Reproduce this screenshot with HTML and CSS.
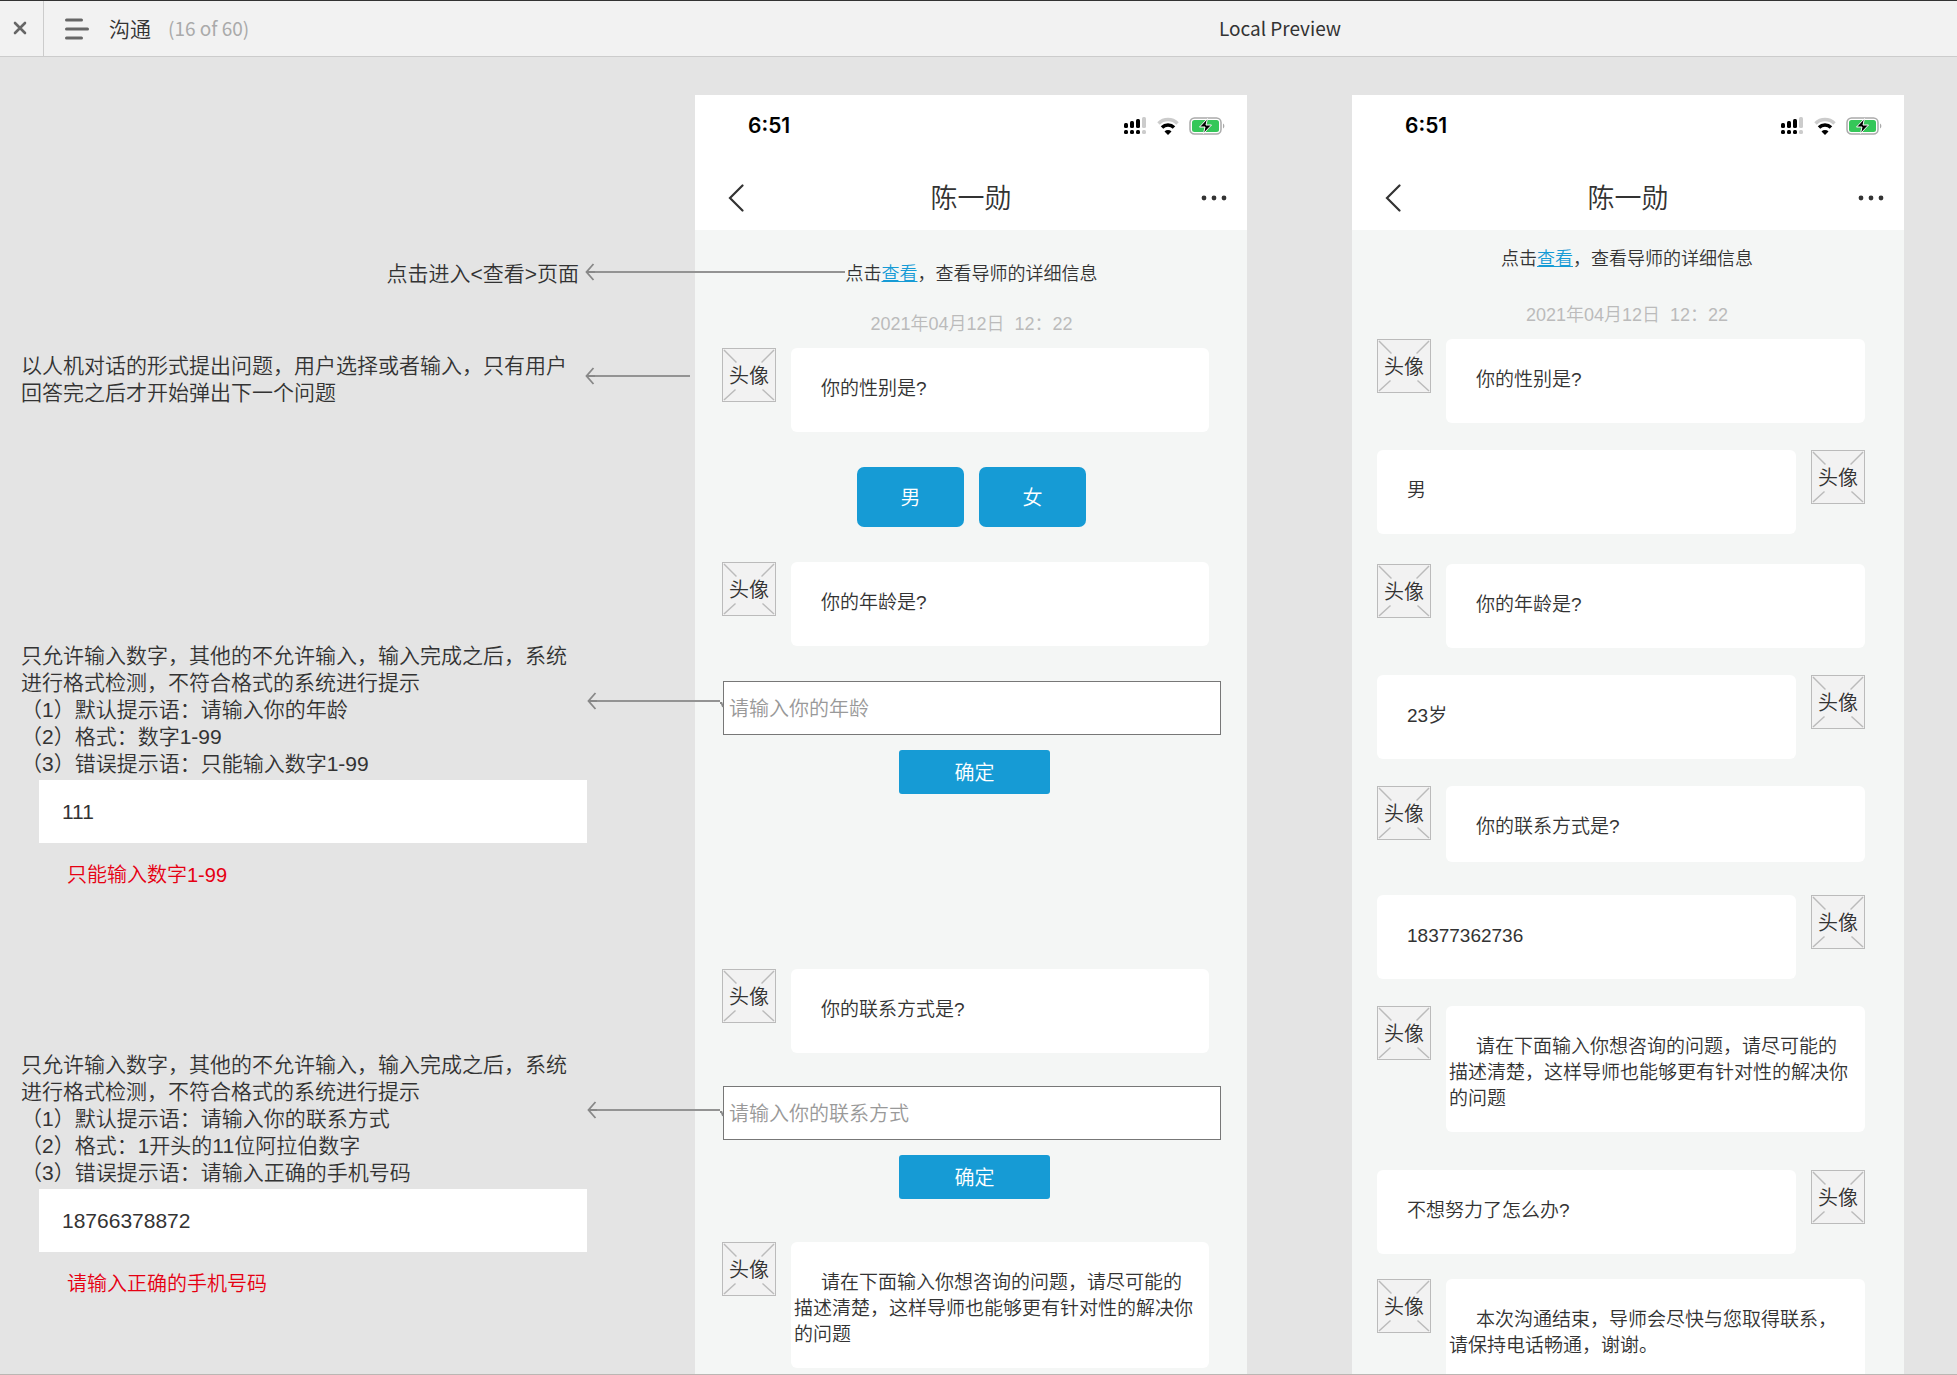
FILE: index.html
```html
<!DOCTYPE html>
<html lang="zh-CN">
<head>
<meta charset="utf-8">
<title>沟通 - Local Preview</title>
<meta name="viewport" content="width=device-width, initial-scale=1">
<link rel="stylesheet" href="styles.css">
</head>
<body>
<svg class="sprite" aria-hidden="true">
  <symbol id="signal" viewBox="0 0 24 18">
    <g fill="#000">
      <rect x="1" y="6" width="4" height="5" rx="1.500"/><rect x="7" y="4" width="4" height="7" rx="1.500"/><rect x="13" y="2" width="4" height="9" rx="1.500"/>
      <rect x="1" y="13" width="4" height="4" rx="1.500"/><rect x="7" y="13" width="4" height="4" rx="1.500"/><rect x="13" y="13" width="4" height="4" rx="1.500"/>
    </g>
    <g fill="#ccc"><rect x="19" y="0" width="4" height="11" rx="1.500"/><rect x="19" y="13" width="4" height="4" rx="1.500"/></g>
  </symbol>
  <symbol id="wifi" viewBox="0 0 22 18">
    <path d="M1.500 6.500a13.500 13.500 0 0 1 19 0" fill="none" stroke="#ccc" stroke-width="3.500"/>
    <path d="M5 10.500a8.500 8.500 0 0 1 12 0" fill="none" stroke="#000" stroke-width="3.500"/>
    <path d="M7.500 14.500a5 5 0 0 1 7 0L11 18z" fill="#000"/>
  </symbol>
  <symbol id="battery" viewBox="0 0 36 18">
    <rect x="1" y="1" width="31" height="16" rx="4.500" fill="#fff" stroke="#aaa" stroke-width="1.500"/>
    <rect x="3" y="3" width="27" height="12" rx="2.500" fill="#35c759"/>
    <path d="M34 6.500c1.800.7 1.800 4.300 0 5z" fill="#aaa"/>
    <path d="M18.500 1.500l-8 8.500h5.500l-1.500 6.500 8-8.500h-5.500z" fill="#000" stroke="#fff" stroke-width="1"/>
  </symbol>
  <symbol id="cross" viewBox="0 0 54 54">
    <path d="M1 1l13 13M53 1L40 14M1 53l12-11M53 53L41 42" stroke="#bbb" stroke-width="1.500"/>
  </symbol>
  <symbol id="head" viewBox="0 0 10 18">
    <path d="M8.500 1L1.500 9l7 8M1.500 9H10" fill="none" stroke="#888" stroke-width="1.800"/>
  </symbol>
  <symbol id="hook" viewBox="0 0 4 8">
    <path d="M0 1h1.500L3 5" fill="none" stroke="#888" stroke-width="1.800"/>
  </symbol>
</svg>

<header class="topbar">
  <div class="topbar-left">
    <button class="close" aria-label="关闭"><svg width="14" height="14" viewBox="0 0 14 14"><path d="M2 2l10 10M12 2L2 12" stroke="#666" stroke-width="2.600" stroke-linecap="round"/></svg></button>
    <button class="pages" aria-label="页面列表"><svg width="24" height="22" viewBox="0 0 24 22"><path d="M1.500 2h15M1.500 11h21M1.500 20h15" stroke="#666" stroke-width="3" stroke-linecap="round"/></svg></button>
    <span class="page-name">沟通</span>
    <span class="page-count">(16 of 60)</span>
  </div>
  <h1 class="preview-title">Local Preview</h1>
</header>

<main class="canvas">
  <section class="notes">
    <div class="note note-link">
      <p class="note-text">点击进入&lt;查看&gt;页面</p>
      <span class="arrow arrow-far"><svg class="arrow-head"><use href="#head"/></svg><i class="arrow-line"></i></span>
    </div>
    <div class="note note-dialog">
      <p class="note-text">以人机对话的形式提出问题，用户选择或者输入，只有用户回答完之后才开始弹出下一个问题</p>
      <span class="arrow arrow-near"><svg class="arrow-head"><use href="#head"/></svg><i class="arrow-line"></i></span>
    </div>
    <div class="note note-age">
      <p class="note-text">只允许输入数字，其他的不允许输入，输入完成之后，系统进行格式检测，不符合格式的系统进行提示<br>（1）默认提示语：请输入你的年龄<br>（2）格式：数字1-99<br>（3）错误提示语：只能输入数字1-99</p>
      <span class="arrow arrow-field"><svg class="arrow-head"><use href="#head"/></svg><i class="arrow-line"></i><svg class="arrow-hook"><use href="#hook"/></svg></span>
    </div>
    <input class="sample" type="text" value="111" aria-label="年龄示例">
    <p class="error">只能输入数字1-99</p>
    <div class="note note-phone">
      <p class="note-text">只允许输入数字，其他的不允许输入，输入完成之后，系统进行格式检测，不符合格式的系统进行提示<br>（1）默认提示语：请输入你的联系方式<br>（2）格式：1开头的11位阿拉伯数字<br>（3）错误提示语：请输入正确的手机号码</p>
      <span class="arrow arrow-field"><svg class="arrow-head"><use href="#head"/></svg><i class="arrow-line"></i><svg class="arrow-hook"><use href="#hook"/></svg></span>
    </div>
    <input class="sample" type="text" value="18766378872" aria-label="联系方式示例">
    <p class="error">请输入正确的手机号码</p>
  </section>

  <section class="phone">
    <div class="status"><span class="time">6:51</span><svg width="24" height="18"><use href="#signal"/></svg><svg width="22" height="18"><use href="#wifi"/></svg><svg width="36" height="18"><use href="#battery"/></svg></div>
    <div class="nav">
      <button class="back" aria-label="返回"><svg width="16" height="28" viewBox="0 0 16 28"><path d="M14.500 1.500L2 14l12.500 12.500" fill="none" stroke="#333" stroke-width="2.200" stroke-linecap="round"/></svg></button>
      <h2 class="contact">陈一勋</h2>
      <button class="more" aria-label="更多"><svg width="26" height="6" viewBox="0 0 26 6"><g fill="#333"><circle cx="3" cy="3" r="2.400"/><circle cx="13" cy="3" r="2.400"/><circle cx="23" cy="3" r="2.400"/></g></svg></button>
    </div>
    <div class="chat chat-ask">
      <p class="hint">点击<a href="#">查看</a>，查看导师的详细信息</p>
      <p class="date">2021年04月12日&nbsp; 12：22</p>
      <div class="row"><span class="avatar"><svg><use href="#cross"/></svg><b>头像</b></span><p class="bubble">你的性别是?</p></div>
      <div class="choices space-l"><button class="choice">男</button><button class="choice">女</button></div>
      <div class="row space-l"><span class="avatar"><svg><use href="#cross"/></svg><b>头像</b></span><p class="bubble">你的年龄是?</p></div>
      <input class="answer space-l" type="text" placeholder="请输入你的年龄" aria-label="年龄">
      <button class="confirm">确定</button>
      <div class="row space-block"><span class="avatar"><svg><use href="#cross"/></svg><b>头像</b></span><p class="bubble">你的联系方式是?</p></div>
      <input class="answer space-k" type="text" placeholder="请输入你的联系方式" aria-label="联系方式">
      <button class="confirm">确定</button>
      <div class="row space-xl"><span class="avatar"><svg><use href="#cross"/></svg><b>头像</b></span><p class="bubble">请在下面输入你想咨询的问题，请尽可能的<br>描述清楚，这样导师也能够更有针对性的解决你的问题</p></div>
    </div>
  </section>

  <section class="phone phone-second">
    <div class="status"><span class="time">6:51</span><svg width="24" height="18"><use href="#signal"/></svg><svg width="22" height="18"><use href="#wifi"/></svg><svg width="36" height="18"><use href="#battery"/></svg></div>
    <div class="nav">
      <button class="back" aria-label="返回"><svg width="16" height="28" viewBox="0 0 16 28"><path d="M14.500 1.500L2 14l12.500 12.500" fill="none" stroke="#333" stroke-width="2.200" stroke-linecap="round"/></svg></button>
      <h2 class="contact">陈一勋</h2>
      <button class="more" aria-label="更多"><svg width="26" height="6" viewBox="0 0 26 6"><g fill="#333"><circle cx="3" cy="3" r="2.400"/><circle cx="13" cy="3" r="2.400"/><circle cx="23" cy="3" r="2.400"/></g></svg></button>
    </div>
    <div class="chat chat-log">
      <p class="hint">点击<a href="#">查看</a>，查看导师的详细信息</p>
      <p class="date">2021年04月12日&nbsp; 12：22</p>
      <div class="row"><span class="avatar"><svg><use href="#cross"/></svg><b>头像</b></span><p class="bubble">你的性别是?</p></div>
      <div class="row row-user space-s"><span class="avatar"><svg><use href="#cross"/></svg><b>头像</b></span><p class="bubble">男</p></div>
      <div class="row space-m"><span class="avatar"><svg><use href="#cross"/></svg><b>头像</b></span><p class="bubble">你的年龄是?</p></div>
      <div class="row row-user space-s"><span class="avatar"><svg><use href="#cross"/></svg><b>头像</b></span><p class="bubble">23岁</p></div>
      <div class="row space-s"><span class="avatar"><svg><use href="#cross"/></svg><b>头像</b></span><p class="bubble bubble-short">你的联系方式是?</p></div>
      <div class="row row-user space-k"><span class="avatar"><svg><use href="#cross"/></svg><b>头像</b></span><p class="bubble">18377362736</p></div>
      <div class="row space-s"><span class="avatar"><svg><use href="#cross"/></svg><b>头像</b></span><p class="bubble">请在下面输入你想咨询的问题，请尽可能的<br>描述清楚，这样导师也能够更有针对性的解决你的问题</p></div>
      <div class="row row-user space-n"><span class="avatar"><svg><use href="#cross"/></svg><b>头像</b></span><p class="bubble">不想努力了怎么办?</p></div>
      <div class="row space-xs"><span class="avatar"><svg><use href="#cross"/></svg><b>头像</b></span><p class="bubble">本次沟通结束，导师会尽快与您取得联系，<br>请保持电话畅通，谢谢。</p></div>
    </div>
  </section>
</main>
</body>
</html>
```
FILE: styles.css
```css
* { box-sizing: border-box; }

body {
  margin: 0;
  height: 100vh;
  display: flex;
  flex-direction: column;
  background: #e4e4e4;
  color: #333;
  font-family: "Liberation Sans", "Noto Sans CJK SC", sans-serif;
  font-weight: 350;
}

p, h1, h2 { margin: 0; font-weight: inherit; }
button, input { font: inherit; color: inherit; border: 0; padding: 0; margin: 0; }
button { background: none; cursor: pointer; }
svg { display: block; }
.sprite { position: absolute; width: 0; height: 0; }

/* Top bar */
.topbar {
  flex: none;
  display: grid;
  grid-template-columns: 603px 1fr;
  align-items: center;
  height: 57px;
  background: #f2f2f2;
  border-top: 1px solid #333;
  border-bottom: 1px solid #ccc;
  font-family: "Noto Sans CJK SC", sans-serif;
}
.topbar-left { display: flex; align-items: center; height: 55px; }
.close {
  width: 44px;
  height: 55px;
  display: grid;
  place-items: center;
  padding: 0 3px 2px 0;
  border-right: 1px solid #ccc;
}
.pages { margin-left: 21px; }
.page-name, .page-count, .preview-title { padding-bottom: 2px; }
.page-name { margin-left: 20px; font-size: 21px; }
.page-count { margin-left: 17px; font-size: 19px; font-weight: 400; color: #aaa; }
.preview-title { text-align: center; font-size: 19px; font-weight: 400; }

/* Canvas */
.canvas {
  flex: 1;
  min-height: 0;
  display: grid;
  grid-template-columns: minmax(695px, 695fr) minmax(552px, 552fr) 105fr minmax(552px, 552fr) 53fr;
  padding-top: 38px;
  border-bottom: 1px solid #bbb6b3;
  overflow: auto;
  scrollbar-width: none;
}

/* Notes */
.notes { padding: 165px 0 0 21px; font-size: 21px; line-height: 27px; }
.note { display: flex; gap: 6px; }
.note-text { flex: 0 0 558px; }
.note-link .note-text { text-align: right; }
.note-dialog { margin-top: 65px; }
.note-age { margin-top: 236px; }
.note-phone { margin-top: 162px; }
.arrow {
  position: relative;
  flex: 1;
  display: flex;
  height: 18px;
  align-items: center;
}
.arrow-head { width: 10px; height: 18px; }
.arrow-line { flex: 1; height: 2px; background: #939393; }
.arrow-hook { width: 4px; height: 8px; align-self: end; }
.arrow-far { margin: 3px -150px 0 0; }
.arrow-near { margin: 15px 5px 0 0; }
.arrow-field { margin: 50px -29px 0 2px; }
.sample {
  display: block;
  width: 548px;
  height: 63px;
  margin: 3px 0 0 18px;
  padding: 0 23px;
  background: #fff;
}
.error { margin: 19px 0 0 46px; font-size: 20px; color: #e60012; }

/* Phone */
.phone { display: flex; flex-direction: column; background: #f4f6f5; min-height: 1280px; }
.phone > * { flex: none; }
.phone-second { grid-column: 4; }
.status {
  display: flex;
  align-items: center;
  gap: 10px;
  height: 61px;
  padding: 0 22px 0 53px;
  background: #fff;
}
.time {
  flex: 1;
  color: #000;
  font: 600 21px/24px Inter, sans-serif;
}
.nav {
  display: grid;
  grid-template-columns: 36px 1fr 48px;
  align-items: center;
  height: 74px;
  padding: 10px 20px 0 32px;
  background: #fff;
}
.back { justify-self: start; padding-left: 1px; }
.contact { text-align: center; font-size: 27px; line-height: 36px; padding-top: 2px; }
.more { justify-self: end; }

.chat { display: flex; flex-direction: column; font-size: 19px; line-height: 26px; }
.chat-ask { padding: 31px 26px 0 27px; }
.chat-log { padding: 16px 39px 0 25px; }
.hint, .date { text-align: center; font-size: 18px; }
.hint a { color: #169bd5; }
.date { margin: 24px 0 11px; color: #bbb; }
.chat-log .hint, .chat-log .date { padding-left: 12px; }
.chat-log .date { margin-top: 30px; }

.row { display: flex; align-items: flex-start; gap: 15px; }
.chat-ask .row { margin-right: 12px; }
.row-user { flex-direction: row-reverse; }
.avatar {
  flex: none;
  display: grid;
  place-items: center;
  width: 54px;
  height: 54px;
  background: #f2f2f2;
  border: 1px solid #bbb;
}
.avatar svg, .avatar b { grid-area: 1 / 1; }
.avatar svg { width: 52px; height: 52px; }
.avatar b { font-weight: inherit; font-size: 20px; padding-top: 2px; }
.bubble {
  flex: 1;
  min-height: 84px;
  padding: 28px 2px 20px 3px;
  background: #fff;
  border-radius: 6px;
  text-indent: 27px;
}
.bubble-short { min-height: 76px; }

.choices { display: flex; justify-content: center; gap: 15px; }
.choice, .answer, .confirm { font-size: 20px; }
.choice, .confirm { padding-top: 2px; background: #169bd5; color: #fff; }
.choice { width: 107px; height: 60px; border-radius: 7px; }
.answer {
  height: 54px;
  margin-left: 1px;
  padding: 2px 5px 0;
  background: #fff;
  border: 1px solid #777;
}
.answer::placeholder { color: #999; opacity: 1; }
.confirm {
  align-self: center;
  width: 151px;
  height: 44px;
  margin: 15px 0 0 6px;
  border-radius: 3px;
}

/* Vertical rhythm of the conversation */
.space-xs { margin-top: 25px; }
.space-s { margin-top: 27px; }
.space-m { margin-top: 30px; }
.space-k { margin-top: 33px; }
.space-l { margin-top: 35px; }
.space-n { margin-top: 38px; }
.space-xl { margin-top: 43px; }
.space-block { margin-top: 175px; }
```
